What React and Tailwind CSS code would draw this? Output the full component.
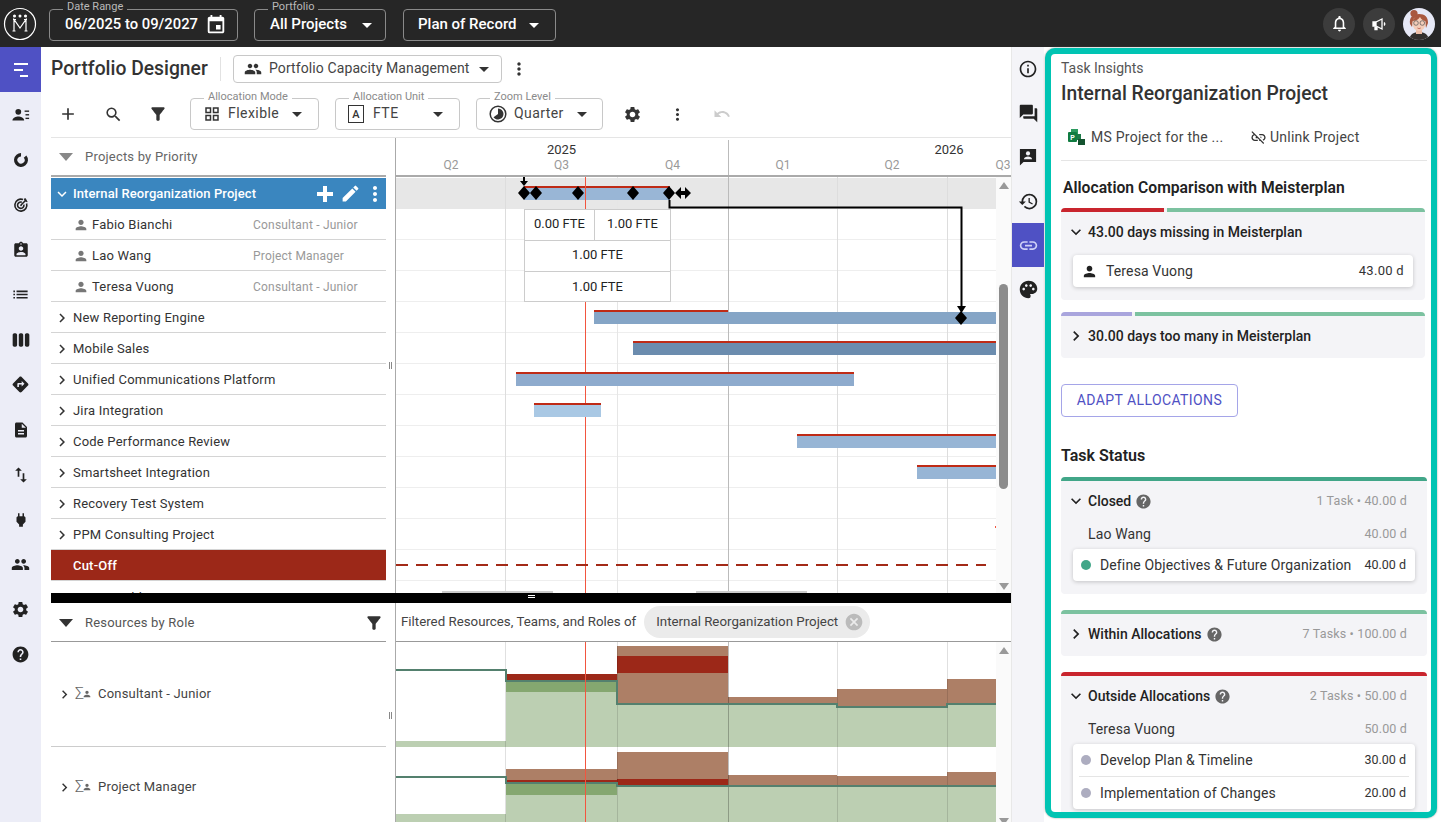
import React from "react";
import {
  MdAdd,
  MdArrowDropDown,
  MdAssignmentInd,
  MdCancel,
  MdChevronRight,
  MdDescription,
  MdDirections,
  MdEdit,
  MdEvent,
  MdExpandMore,
  MdFilterAlt,
  MdForum,
  MdHelp,
  MdHistory,
  MdImportExport,
  MdInfoOutline,
  MdLink,
  MdLinkOff,
  MdList,
  MdMoreVert,
  MdNotificationsNone,
  MdOutlineGridView,
  MdPalette,
  MdPeople,
  MdPerson,
  MdPower,
  MdSearch,
  MdSettings,
  MdUndo,
  MdViewWeek,
} from "react-icons/md";

function Logo() {
  return (
    <svg width="34" height="34" viewBox="0 0 34 34" fill="none" stroke="#fff" strokeWidth="1.200">
      <circle cx="17" cy="17" r="15.500" />
      <path d="M11 24V12.500L17 21L23 12.500V24M9.500 24H12.500M21.500 24H24.500M10 12.500H13M21 12.500H24" />
      <circle cx="11.500" cy="9" r="0.900" fill="#fff" />
      <circle cx="17" cy="9" r="0.900" fill="#fff" />
      <circle cx="22.500" cy="9" r="0.900" fill="#fff" />
    </svg>
  );
}

function Megaphone() {
  return (
    <svg width="16" height="16" viewBox="0 0 16 16" fill="none" stroke="#fff" strokeWidth="1.300">
      <path d="M2 6H5V10H2z" fill="#fff" />
      <path d="M5 6L11 3V13L5 10" />
      <path d="M4 10.500V13.500H6V11" fill="#fff" />
      <path d="M13 6.500C13.800 7.300 13.800 8.700 13 9.500" />
    </svg>
  );
}

function Avatar() {
  return (
    <svg width="32" height="32" viewBox="0 0 32 32" className="rounded-full bg-[#e6e8f6]">
      <path d="M6 32c1-6 5-8 10-8s9 2 10 8z" fill="#33302f" />
      <rect x="13" y="20" width="6" height="6" fill="#eebfa9" />
      <circle cx="11" cy="5.500" r="3.600" fill="#a9583f" />
      <path d="M7 16C6 9 10 6 16 6s9 3 9 9l-2 5-1-7H10l-1 6z" fill="#a9583f" />
      <ellipse cx="16" cy="15.500" rx="6.600" ry="7.400" fill="#f4cdb9" />
      <path d="M9 13c3 0 6-1 8-4 1 2 3 4 6 4l-1-5-8-1z" fill="#a9583f" />
      <circle cx="13" cy="15" r="2.300" fill="none" stroke="#555" strokeWidth="0.700" />
      <circle cx="19.300" cy="15" r="2.300" fill="none" stroke="#555" strokeWidth="0.700" />
      <path d="M14.500 20c1 .7 2.200.7 3.200 0" stroke="#b34c3e" strokeWidth="0.800" fill="none" />
    </svg>
  );
}

// outlined select with the little label cut into its top border
function Field({ label, dark, className, children }) {
  return (
    <div
      className={`relative flex h-[32px] items-center rounded border ${
        dark ? "border-[#8a8a8a] text-white" : "border-[#c8c8c8] text-[#444]"
      } ${className}`}
    >
      {label && (
        <span
          className={`absolute left-[13px] px-[4px] text-[11px] leading-[12px] ${
            dark ? "top-[-9px] bg-[#262626] text-[#b9b9b9]" : "top-[-8px] bg-white text-[#8a8a8a]"
          }`}
        >
          {label}
        </span>
      )}
      {children}
    </div>
  );
}

function TopBar() {
  return (
    <header className="flex h-[47px] shrink-0 items-center bg-[#262626] pr-[6px]">
      <div className="ml-[3px] mr-[12px] flex">
        <Logo />
      </div>
      <Field label="Date Range" dark className="mt-[2px] w-[189px] pl-[15px]">
        <span className="text-[14.800px] font-medium">06/2025 to 09/2027</span>
        <MdEvent className="ml-[7px] text-[22px]" />
      </Field>
      <Field label="Portfolio" dark className="ml-[16px] mt-[2px] w-[132px] pl-[15px]">
        <span className="text-[15px] font-medium">All Projects</span>
        <MdArrowDropDown className="ml-[8px] text-[24px]" />
      </Field>
      <Field dark className="ml-[17px] mt-[2px] w-[153px] pl-[14px]">
        <span className="text-[15px] font-medium">Plan of Record</span>
        <MdArrowDropDown className="ml-[5px] text-[24px]" />
      </Field>
      <div className="ml-auto flex items-center gap-[8px]">
        <span className="flex h-[32px] w-[32px] items-center justify-center rounded-full bg-[#3c3c3c] text-white">
          <MdNotificationsNone className="text-[19px]" />
        </span>
        <span className="flex h-[32px] w-[32px] items-center justify-center rounded-full bg-[#3c3c3c]">
          <Megaphone />
        </span>
        <Avatar />
      </div>
    </header>
  );
}

function GanttIcon() {
  return (
    <svg width="20" height="20" viewBox="0 0 20 20" fill="#fff">
      <rect x="3" y="3" width="14" height="2" />
      <rect x="3" y="9" width="9" height="2" />
      <rect x="9" y="15" width="8" height="2" />
    </svg>
  );
}

function PersonListIcon() {
  return (
    <svg width="18" height="18" viewBox="0 0 20 20" fill="#222">
      <circle cx="7" cy="6.500" r="3.200" />
      <path d="M0.500 16c0-3 4-4.300 6.500-4.300s6.500 1.300 6.500 4.300z" />
      <rect x="14" y="5" width="5" height="1.500" />
      <rect x="15" y="9" width="4" height="1.500" />
      <rect x="15" y="13" width="4" height="1.500" />
    </svg>
  );
}

function DonutIcon() {
  return (
    <svg width="16" height="16" viewBox="0 0 16 16" fill="none" stroke="#222" strokeWidth="3.400">
      <circle cx="8" cy="8" r="5.300" strokeDasharray="28 5.300" transform="rotate(-40 8 8)" />
    </svg>
  );
}

function TargetIcon() {
  return (
    <svg width="16" height="16" viewBox="0 0 20 20" fill="none" stroke="#222" strokeWidth="2">
      <path d="M12.500 3.200A7.500 7.500 0 1 0 17 8" />
      <path d="M11 6.500A4 4 0 1 0 13.600 9.500" />
      <path d="M10 10L15 5" />
      <path d="M14 2.500L15 5L17.700 6L15.500 2z" fill="#222" strokeWidth="1" />
      <circle cx="10" cy="10.500" r="1" fill="#222" stroke="none" />
    </svg>
  );
}

function BoldPlus() {
  return (
    <svg width="16" height="16" viewBox="0 0 16 16" fill="#fff">
      <rect x="6" y="0" width="4" height="16" />
      <rect x="0" y="6" width="16" height="4" />
    </svg>
  );
}

const railIcons = [
  <PersonListIcon />,
  <DonutIcon />,
  <TargetIcon />,
  <MdAssignmentInd className="text-[18px] text-[#222]" />,
  <MdList className="text-[19px] text-[#222]" />,
  <MdViewWeek className="text-[20px] text-[#222]" />,
  <MdDirections className="text-[19px] text-[#222]" />,
  <MdDescription className="text-[18px] text-[#222]" />,
  <MdImportExport className="text-[20px] text-[#222]" />,
  <MdPower className="text-[18px] text-[#222]" />,
  <MdPeople className="text-[19px] text-[#222]" />,
  <MdSettings className="text-[19px] text-[#222]" />,
  <MdHelp className="text-[19px] text-[#222]" />,
];

function LeftRail() {
  return (
    <nav className="flex w-[41px] shrink-0 flex-col bg-[#ecedf7]">
      <div className="flex h-[45px] items-center justify-center bg-[#4f51c4]">
        <GanttIcon />
      </div>
      {railIcons.map((icon, i) => (
        <div key={i} className="flex h-[45px] items-center justify-center">
          {icon}
        </div>
      ))}
    </nav>
  );
}

function TitleRow() {
  return (
    <div className="flex h-[45px] shrink-0 items-center pb-[2px] pl-[10px]">
      <h1 className="w-[157px] whitespace-nowrap text-[19.300px] font-medium leading-none text-[#333]">
        Portfolio Designer
      </h1>
      <span className="ml-[12px] h-[24px] w-px bg-[#e2e2e2]" />
      <div className="ml-[12px] flex h-[28px] w-[269px] items-center rounded border border-[#c8c8c8] pl-[10px] text-[#444]">
        <MdPeople className="text-[18px] text-[#333]" />
        <span className="ml-[7px] text-[14px] tracking-[0.1px]">Portfolio Capacity Management</span>
        <MdArrowDropDown className="ml-[2px] text-[24px] text-[#333]" />
      </div>
      <MdMoreVert className="ml-[7px] text-[20px] text-[#333]" />
    </div>
  );
}

function QuarterIcon() {
  return (
    <svg width="18" height="18" viewBox="0 0 18 18">
      <circle cx="9" cy="9" r="7.800" fill="none" stroke="#333" strokeWidth="1.500" />
      <path d="M9 3.500A5.500 5.500 0 1 1 4.500 12.200L9 9z" fill="#333" />
    </svg>
  );
}

function Toolbar() {
  return (
    <div className="flex h-[45px] shrink-0 items-center pb-px text-[#333]">
      <div className="flex w-[149px] items-center pl-[17px]">
        <MdAdd className="text-[20px]" />
        <MdSearch className="ml-[26px] text-[19px]" />
        <MdFilterAlt className="ml-[25px] text-[20px]" />
      </div>
      <Field label="Allocation Mode" className="w-[129px] pl-[12px]">
        <MdOutlineGridView className="text-[18px] text-[#333]" />
        <span className="mb-[2px] ml-[7px] text-[14px] tracking-[0.45px]">Flexible</span>
        <MdArrowDropDown className="ml-[6px] text-[24px] text-[#333]" />
      </Field>
      <Field label="Allocation Unit" className="ml-[16px] w-[125px] pl-[12px]">
        <span className="flex h-[18px] w-[16px] items-center justify-center border-[1.5px] border-[#333] text-[11px] font-medium leading-none text-[#333]">
          A
        </span>
        <span className="mb-[2px] ml-[9px] text-[14px] tracking-[0.45px]">FTE</span>
        <MdArrowDropDown className="ml-[27px] text-[24px] text-[#333]" />
      </Field>
      <Field label="Zoom Level" className="ml-[16px] w-[127px] pl-[12px]">
        <QuarterIcon />
        <span className="mb-[2px] ml-[7px] text-[14px] tracking-[0.4px]">Quarter</span>
        <MdArrowDropDown className="ml-[6px] text-[24px] text-[#333]" />
      </Field>
      <MdSettings className="ml-[20px] text-[19px]" />
      <MdMoreVert className="ml-[26px] text-[19px]" />
      <MdUndo className="ml-[26px] text-[18px] text-[#ccc]" />
    </div>
  );
}

const people = [
  ["Fabio Bianchi", "Consultant - Junior"],
  ["Lao Wang", "Project Manager"],
  ["Teresa Vuong", "Consultant - Junior"],
];

const projects = [
  "New Reporting Engine",
  "Mobile Sales",
  "Unified Communications Platform",
  "Jira Integration",
  "Code Performance Review",
  "Smartsheet Integration",
  "Recovery Test System",
  "PPM Consulting Project",
];

function ProjectList() {
  return (
    <div className="w-[335px] shrink-0 overflow-hidden text-[13px] tracking-[0.2px] text-[#333]">
      <div className="flex h-[39px] items-center border-b-2 border-[#aaa] text-[#666]">
        <svg width="14" height="8" viewBox="0 0 14 8" className="ml-[8px]">
          <path d="M0 0H14L7 8z" fill="#888" />
        </svg>
        <span className="ml-[12px]">Projects by Priority</span>
      </div>
      <div className="mt-[1px] flex h-[31px] items-center bg-[#3a86bf] pl-[2px] font-medium tracking-[0.1px] text-white">
        <MdExpandMore className="text-[18px]" />
        <span className="ml-[2px]">Internal Reorganization Project</span>
        <span className="ml-auto flex">
          <BoldPlus />
        </span>
        <MdEdit className="ml-[7px] text-[21px]" />
        <MdMoreVert className="ml-[2px] mr-[-1px] text-[24px]" />
      </div>
      {people.map(([name, role]) => (
        <div key={name} className="flex h-[31px] items-center border-b border-[#d4d4d4] pt-[2px]">
          <MdPerson className="ml-[22px] text-[16px] text-[#777]" />
          <span className="ml-[3px] w-[161px]">{name}</span>
          <span className="text-[12px] text-[#999]">{role}</span>
        </div>
      ))}
      {projects.map((name) => (
        <div key={name} className="flex h-[31px] items-center border-b border-[#d4d4d4] pl-[2px] pt-[2px]">
          <MdChevronRight className="text-[18px]" />
          <span className="ml-[2px]">{name}</span>
        </div>
      ))}
      <div className="flex h-[31px] items-center border-b border-[#d4d4d4] bg-[#9c2818] pl-[22px] pt-[2px] font-medium text-white">
        Cut-Off
      </div>
      <div className="flex h-[31px] items-center pl-[2px] pt-[2px]">
        <MdChevronRight className="text-[18px]" />
        <span className="ml-[2px]">Migrate Old Systems</span>
      </div>
    </div>
  );
}

function Splitter({ className }) {
  return (
    <div className={`relative w-[10px] shrink-0 border-r border-[#aaa] ${className}`}>
      <span className="absolute left-[3px] flex gap-px">
        <i className="h-[7px] w-px bg-[#888]" />
        <i className="h-[7px] w-px bg-[#888]" />
      </span>
    </div>
  );
}

const quarters = [
  ["Q2", "w-[110px]"],
  ["Q3", "w-[111px]"],
  ["Q4", "w-[112px]"],
  ["Q1", "w-[108px]"],
  ["Q2", "w-[110px]"],
  ["Q3", "w-[112px]"],
];

function TimeHeader() {
  return (
    <div className="h-[39px] shrink-0 overflow-hidden border-b-2 border-[#aaa]">
      <div className="flex h-[21px] w-[800px] items-end text-[13px] text-[#333]">
        <span className="w-[333px] border-r border-[#bbb] pr-px text-center leading-[19px]">2025</span>
        <span className="w-[440px] text-center leading-[19px]">2026</span>
      </div>
      <div className="flex h-[16px] w-[800px] text-[12px] leading-[13px] text-[#999]">
        {quarters.map(([label, w], i) => (
          <span key={i} className={`${w} ${i === 2 ? "border-r border-[#bbb]" : ""} text-center`}>
            {label}
          </span>
        ))}
      </div>
    </div>
  );
}

const bars = [
  [594, 312, 402, "#85a5c6", 728],
  [633, 343, 363, "#6b8cae", 996],
  [516, 374, 338, "#8eabcd", 854],
  [534, 405, 67, "#a9c8e4", 601],
  [797, 436, 199, "#97b5d5", 996],
  [917, 467, 79, "#97b5d5", 996],
];

const diamonds = [
  [524, 193],
  [536, 193],
  [578, 193],
  [633, 193],
  [669, 193],
  [961, 318],
];

function Diamond({ x, y }) {
  return <path d={`M${x} ${y - 7}L${x + 6} ${y}L${x} ${y + 7}L${x - 6} ${y}z`} fill="#000" />;
}

function GanttDrawing() {
  return (
    <svg width="600" height="416" className="absolute inset-0">
      <g transform="translate(-396 -177)">
        <path d="M505.500 177V593" stroke="#ddd" />
        <path d="M617.500 177V593" stroke="#e6e6e6" />
        <path d="M728.500 177V593" stroke="#bbb" />
        <path d="M837.500 177V593" stroke="#ddd" />
        <path d="M947.500 177V593" stroke="#ddd" />
        <path d="M585.500 177V593" stroke="#f2553f" />
        <rect x="524" y="187" width="146" height="13" fill="#99b6d6" />
        <rect x="524" y="186" width="146" height="2" fill="#bf2b16" />
        {bars.map(([x, y, w, color, redEnd]) => (
          <g key={y}>
            <rect x={x} y={y} width={w} height="12" fill={color} />
            <rect x={x} y={y - 2} width={redEnd - x} height="2" fill="#bf2b16" />
          </g>
        ))}
        <path d="M585.500 186V200" stroke="#f2553f" />
        <path d="M524 177V182" stroke="#000" strokeWidth="2" />
        <path d="M520 181H528L524 186z" fill="#000" />
        <path d="M669.500 200V207.500H961.500V307" fill="none" stroke="#000" strokeWidth="2" />
        <path d="M957 306H966L961.500 313z" fill="#000" />
        {diamonds.map(([x, y]) => (
          <Diamond key={x} x={x} y={y} />
        ))}
        <path d="M675 193L681 187V199zM691 193L685 187V199z" fill="#000" />
        <rect x="680" y="191" width="6" height="4" fill="#000" />
        <path d="M396 565H986" stroke="#a32a17" strokeWidth="2" strokeDasharray="12 8" />
        <rect x="442" y="591" width="111" height="2" fill="#ccc" />
        <rect x="696" y="591" width="111" height="2" fill="#ccc" />
        <rect x="995" y="526" width="1" height="2" fill="#f2553f" />
      </g>
    </svg>
  );
}

function FteTable() {
  return (
    <div className="absolute left-[128px] top-[32px] w-[147px] border border-[#ccc] bg-white text-center text-[13px] text-[#222]">
      <div className="flex h-[31px] items-center border-b border-[#ccc]">
        <span className="flex h-full w-[70px] items-center justify-center border-r border-[#ccc] pb-[2px]">
          0.00 FTE
        </span>
        <span className="flex-1 pb-[2px]">1.00 FTE</span>
      </div>
      <div className="flex h-[31px] items-center justify-center border-b border-[#ccc] pb-[2px]">1.00 FTE</div>
      <div className="flex h-[29px] items-center justify-center">1.00 FTE</div>
    </div>
  );
}

function ScrollStrip({ thumb, up, down }) {
  return (
    <div className="relative w-[15px] shrink-0 bg-[#fafafa]">
      <svg width="10" height="7" viewBox="0 0 10 7" className={`absolute left-[3px] ${up}`}>
        <path d="M0 7H10L5 0z" fill="#999" />
      </svg>
      {thumb && <div className={`absolute left-[3px] w-[9px] rounded-full bg-[#8c8c8c] ${thumb}`} />}
      <svg width="10" height="7" viewBox="0 0 10 7" className={`absolute left-[3px] ${down}`}>
        <path d="M0 0H10L5 7z" fill="#999" />
      </svg>
    </div>
  );
}

function GanttChart() {
  return (
    <div className="flex w-[615px] shrink-0 flex-col overflow-hidden">
      <TimeHeader />
      <div className="flex min-h-0 flex-1">
        <div className="relative w-[600px] shrink-0">
          <div className="mt-[1px] h-[31px] bg-[#e7e7e7]" />
          {Array.from({ length: 13 }).map((_, i) => (
            <div key={i} className="h-[31px] border-b border-[#eee]" />
          ))}
          <GanttDrawing />
          <FteTable />
        </div>
        <ScrollStrip up="top-[5px]" thumb="top-[107px] h-[205px]" down="top-[406px]" />
      </div>
    </div>
  );
}

function ResourceList() {
  return (
    <div className="w-[335px] shrink-0 text-[13px] tracking-[0.2px] text-[#333]">
      <div className="flex h-[39px] items-center border-b border-[#999] pt-px text-[#555]">
        <svg width="14" height="8" viewBox="0 0 14 8" className="ml-[8px]">
          <path d="M0 0H14L7 8z" fill="#333" />
        </svg>
        <span className="ml-[12px] flex-1">Resources by Role</span>
        <MdFilterAlt className="mr-[2px] text-[20px] text-[#333]" />
      </div>
      <RoleRow name="Consultant - Junior" className="h-[105px] border-b border-[#ccc]" />
      <RoleRow name="Project Manager" className="h-[80px]" />
    </div>
  );
}

function RoleRow({ name, className }) {
  return (
    <div className={`flex items-center pl-[5px] ${className}`}>
      <MdChevronRight className="text-[17px]" />
      <span className="ml-[2px] flex w-[20px] items-center text-[16px] font-light leading-none text-[#666]">
        Σ<MdPerson className="ml-[-2px] text-[10px]" />
      </span>
      <span className="ml-[3px] text-[#444]">{name}</span>
    </div>
  );
}

const columns = [396, 506, 617, 728, 837, 947, 996];

// [column, top, bottom, colour]
const histogram = [
  [0, 741, 747, "#bccfb2"],
  [1, 674, 681, "#9c2818"],
  [1, 681, 692, "#85a770"],
  [1, 692, 747, "#bccfb2"],
  [2, 646, 656, "#ad7f66"],
  [2, 656, 673, "#9c2818"],
  [2, 673, 704, "#ad7f66"],
  [2, 704, 747, "#bccfb2"],
  [3, 697, 704, "#ad7f66"],
  [3, 704, 747, "#bccfb2"],
  [4, 689, 707, "#ad7f66"],
  [4, 707, 747, "#bccfb2"],
  [5, 679, 704, "#ad7f66"],
  [5, 704, 747, "#bccfb2"],
  [0, 814, 822, "#bccfb2"],
  [1, 769, 780, "#ad7f66"],
  [1, 780, 783, "#9c2818"],
  [1, 783, 795, "#85a770"],
  [1, 795, 822, "#bccfb2"],
  [2, 752, 779, "#ad7f66"],
  [2, 779, 786, "#9c2818"],
  [2, 786, 822, "#bccfb2"],
  [3, 775, 786, "#ad7f66"],
  [3, 786, 822, "#bccfb2"],
  [4, 776, 786, "#ad7f66"],
  [4, 786, 822, "#bccfb2"],
  [5, 772, 786, "#ad7f66"],
  [5, 786, 822, "#bccfb2"],
];

function Histogram() {
  return (
    <svg width="600" height="180" className="shrink-0">
      <g transform="translate(-396 -642)">
        {histogram.map(([col, top, bottom, color], i) => (
          <rect
            key={i}
            x={columns[col]}
            y={top}
            width={columns[col + 1] - columns[col]}
            height={bottom - top}
            fill={color}
          />
        ))}
        <path d="M505.500 642V822" stroke="#000" strokeOpacity="0.12" />
        <path d="M617.500 642V822" stroke="#000" strokeOpacity="0.12" />
        <path d="M728.500 642V822" stroke="#000" strokeOpacity="0.25" />
        <path d="M837.500 642V822" stroke="#000" strokeOpacity="0.12" />
        <path d="M947.500 642V822" stroke="#000" strokeOpacity="0.12" />
        <path
          d="M396 670H506V681H617V704H837V707H947V704H996M396 777H506V783H617V786H996"
          fill="none"
          stroke="#54806e"
          strokeWidth="2"
        />
        <path d="M585.500 642V822" stroke="#f2553f" />
      </g>
    </svg>
  );
}

function ResourceChart() {
  return (
    <div className="flex w-[615px] shrink-0 flex-col">
      <div className="flex h-[39px] shrink-0 items-center border-b border-[#999] pl-[5px] text-[13.300px] text-[#444]">
        <span>Filtered Resources, Teams, and Roles of</span>
        <span className="ml-[8px] flex h-[32px] items-center rounded-full bg-[#ebebeb] pl-[12px] pr-[6px]">
          Internal Reorganization Project
          <MdCancel className="ml-[6px] text-[20px] text-[#bbb]" />
        </span>
      </div>
      <div className="flex min-h-0 flex-1">
        <Histogram />
        <ScrollStrip up="top-[5px]" down="top-[176px]" />
      </div>
    </div>
  );
}

function Planner() {
  return (
    <main className="flex w-[970px] shrink-0 flex-col">
      <TitleRow />
      <Toolbar />
      <div className="ml-[10px] flex h-[456px] shrink-0 border-t border-[#e5e5e5]">
        <ProjectList />
        <Splitter className="[&>span]:top-[224px]" />
        <GanttChart />
      </div>
      <div className="relative ml-[10px] h-[10px] shrink-0 bg-black">
        <span className="absolute left-[477px] top-[2px] h-[3px] w-[7px] border-y border-white" />
      </div>
      <div className="ml-[10px] flex min-h-0 flex-1">
        <ResourceList />
        <Splitter className="[&>span]:top-[109px]" />
        <ResourceChart />
      </div>
    </main>
  );
}

function ChatPersonIcon() {
  return (
    <svg width="18" height="18" viewBox="0 0 20 20">
      <path d="M1 1H19V15.500H5L1 19.500z" fill="#222" />
      <circle cx="10" cy="6" r="2.300" fill="#f4f4f8" />
      <path d="M5.500 12.500c0-2 2.500-3 4.500-3s4.500 1 4.500 3z" fill="#f4f4f8" />
    </svg>
  );
}

function SideTabs() {
  const tab = "flex h-[44px] items-center justify-center text-[#222]";
  return (
    <aside className="w-[33px] shrink-0 border-l border-[#e8e8e8] bg-[#f4f4f8] pt-0">
      <div className={tab}>
        <MdInfoOutline className="text-[20px]" />
      </div>
      <div className={tab}>
        <MdForum className="text-[21px]" />
      </div>
      <div className={tab}>
        <ChatPersonIcon />
      </div>
      <div className={tab}>
        <MdHistory className="text-[21px]" />
      </div>
      <div className="flex h-[44px] items-center justify-center bg-[#4f51c4] text-[#cfd0f7]">
        <MdLink className="text-[21px]" />
      </div>
      <div className={tab}>
        <MdPalette className="text-[21px]" />
      </div>
    </aside>
  );
}

function MsProjectIcon() {
  return (
    <svg width="17" height="16" viewBox="0 0 17 16">
      <rect x="3" y="0" width="7" height="6" fill="#2c9a5f" />
      <rect x="6" y="5" width="7" height="6" fill="#1d7a48" />
      <rect x="10" y="10" width="7" height="6" fill="#14532f" />
      <rect x="0" y="3" width="9" height="10" rx="1" fill="#107c41" />
      <text x="2.300" y="11" fontSize="7" fontWeight="700" fill="#fff">
        P
      </text>
    </svg>
  );
}

function InsightCard({ bar, className = "", children }) {
  return (
    <section className={`overflow-hidden rounded bg-[#f4f4f7] ${className}`}>
      <div className="flex h-[4px] gap-[3px]">{bar}</div>
      {children}
    </section>
  );
}

function CardHead({ open, title, help, right }) {
  const Chevron = open ? MdExpandMore : MdChevronRight;
  return (
    <div className="flex h-[40px] items-center pl-[5px] pr-[20px]">
      <Chevron className="text-[20px] text-[#222]" />
      <span className="ml-[2px] text-[14px] font-medium text-[#222]">{title}</span>
      {help && <MdHelp className="ml-[4px] text-[17px] text-[#666]" />}
      {right && <span className="ml-auto text-[12.500px] tracking-[0.15px] text-[#999]">{right}</span>}
    </div>
  );
}

function NameRow({ name, value }) {
  return (
    <div className="flex h-[26px] items-center pl-[27px] pr-[20px] text-[14px] tracking-[0.13px] text-[#333]">
      {name}
      <span className="ml-auto text-[12.500px] tracking-[0.15px] text-[#999]">{value}</span>
    </div>
  );
}

function TaskRow({ color, name, value }) {
  return (
    <div className="flex h-[32px] items-center pl-[8px] pr-[9px] text-[14px] tracking-[0.13px] text-[#333]">
      <span className={`h-[10px] w-[10px] rounded-full ${color}`} />
      <span className="ml-[9px]">{name}</span>
      <span className="ml-auto text-[12.500px] font-normal tracking-normal text-[#333]">{value}</span>
    </div>
  );
}

function InsightsPanel() {
  return (
    <div className="ml-px mt-px h-[770px] w-[392px] shrink-0 overflow-hidden rounded-[10px] border-[6px] border-[#00c4b3] bg-white pl-[10px] pr-[4px] shadow-[0_0_2px_#999]">
      <div className="flex h-[28px] items-center text-[14px] text-[#555]">Task Insights</div>
      <h2 className="flex h-[22px] items-center pt-[2px] text-[19.300px] font-medium text-[#333]">
        Internal Reorganization Project
      </h2>
      <div className="mt-[19px] flex h-[28px] items-center pl-[7px] text-[14px] tracking-[0.25px] text-[#444]">
        <MsProjectIcon />
        <span className="ml-[6px] w-[133px] whitespace-nowrap">MS Project for the ...</span>
        <MdLinkOff className="ml-[26px] text-[17px] text-[#333]" />
        <span className="ml-[3px]">Unlink Project</span>
      </div>
      <div className="mt-[9px] h-px bg-[#e5e5e5]" />
      <h3 className="mt-[17px] flex h-[20px] items-center pl-[2px] text-[15.700px] font-semibold text-[#222]">
        Allocation Comparison with Meisterplan
      </h3>
      <InsightCard
        className="mt-[10px] w-[364px] pb-[13px]"
        bar={
          <>
            <i className="w-[103px] bg-[#c9252e]" />
            <i className="flex-1 bg-[#7cc2a0]" />
          </>
        }
      >
        <CardHead open title="43.00 days missing in Meisterplan" />
        <div className="mx-[12px] mt-[3px] flex h-[32px] items-center rounded bg-white pl-[8px] pr-[9px] text-[14px] tracking-[0.13px] text-[#333] shadow-[0_1px_4px_rgba(0,0,0,0.2)]">
          <MdPerson className="text-[17px] text-[#222]" />
          <span className="ml-[8px]">Teresa Vuong</span>
          <span className="ml-auto text-[13px] tracking-[0.3px]">43.00 d</span>
        </div>
      </InsightCard>
      <InsightCard
        className="mt-[12px] w-[364px] pb-[2px]"
        bar={
          <>
            <i className="w-[71px] bg-[#a9a5dd]" />
            <i className="flex-1 bg-[#7cc2a0]" />
          </>
        }
      >
        <CardHead title="30.00 days too many in Meisterplan" />
      </InsightCard>
      <button className="mt-[26px] flex h-[33px] w-[177px] items-center justify-center rounded border border-[#a5a5e8] text-[14px] tracking-[0.4px] text-[#4f51c4]">
        ADAPT ALLOCATIONS
      </button>
      <h3 className="mt-[29px] flex h-[20px] items-center text-[16px] font-semibold text-[#222]">Task Status</h3>
      <InsightCard className="mt-[11px] pb-[13px]" bar={<i className="flex-1 bg-[#41a688]" />}>
        <CardHead open title="Closed" help right="1 Task • 40.00 d" />
        <NameRow name="Lao Wang" value="40.00 d" />
        <div className="mx-[12px] mt-[2px] rounded bg-white shadow-[0_1px_4px_rgba(0,0,0,0.2)]">
          <TaskRow color="bg-[#41a688]" name="Define Objectives & Future Organization" value="40.00 d" />
        </div>
      </InsightCard>
      <InsightCard className="mt-[16px] pb-[2px]" bar={<i className="flex-1 bg-[#7cc2a0]" />}>
        <CardHead title="Within Allocations" help right="7 Tasks • 100.00 d" />
      </InsightCard>
      <InsightCard className="mt-[16px] pb-[13px]" bar={<i className="flex-1 bg-[#c9252e]" />}>
        <CardHead open title="Outside Allocations" help right="2 Tasks • 50.00 d" />
        <NameRow name="Teresa Vuong" value="50.00 d" />
        <div className="mx-[12px] mt-[2px] rounded bg-white shadow-[0_1px_4px_rgba(0,0,0,0.2)]">
          <TaskRow color="bg-[#adadc0]" name="Develop Plan & Timeline" value="30.00 d" />
          <div className="mx-[6px] h-px bg-[#e5e5e5]" />
          <TaskRow color="bg-[#adadc0]" name="Implementation of Changes" value="20.00 d" />
        </div>
      </InsightCard>
    </div>
  );
}

export default function App() {
  return (
    <div className="flex h-screen w-full flex-col overflow-hidden bg-white font-['Roboto',sans-serif]">
      <TopBar />
      <div className="flex min-h-0 flex-1">
        <LeftRail />
        <Planner />
        <SideTabs />
        <InsightsPanel />
      </div>
    </div>
  );
}
